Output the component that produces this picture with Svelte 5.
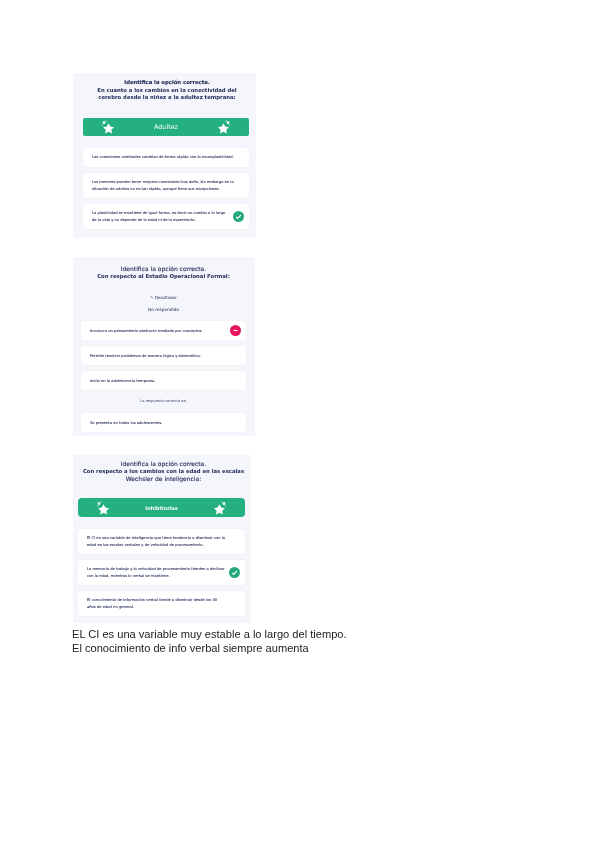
<script>
  const first = [
    { lines: ['Las conexiones cerebrales cambian de forma rápida con la neuroplasticidad.'] },
    { lines: ['Los menores pueden tener mejores conexiones tras daño, sin embargo en la', 'situación de adultos no es tan rápida, aunque tiene sus excepciones.'] },
    { lines: ['La plasticidad se mantiene de igual forma, es decir no cambia a lo largo', 'de la vida y no depende de la edad ni de la experiencia.'], mark: 'ok' }
  ];
  const third = [
    { lines: ['El CI es una variable de inteligencia que tiene tendencia a disminuir con la', 'edad en las escalas verbales y de velocidad de procesamiento.'] },
    { lines: ['La memoria de trabajo y la velocidad de procesamiento tienden a declinar', 'con la edad, mientras lo verbal se mantiene.'], mark: 'ok' },
    { lines: ['El conocimiento de información verbal tiende a disminuir desde los 30', 'años de edad en general.'] }
  ];
</script>

{#snippet star(flip)}
  <svg class="star" class:flip viewBox="0 0 24 24" aria-hidden="true">
    <path d="M13 5.5l3 5.8 6.4 1-4.6 4.4 1.1 6.3-5.9-3-5.9 3 1.1-6.3-4.6-4.4 6.4-1z" fill="#fff" />
    <circle cx="5" cy="4.5" r="2.2" fill="#fff" />
    <circle cx="8.5" cy="1.8" r="1.1" fill="#fff" />
    <circle cx="2.5" cy="8.5" r="1" fill="#fff" />
  </svg>
{/snippet}

{#snippet option(o)}
  <div class="option">
    <div class="option-text">
      {#each o.lines as l}<div>{l}</div>{/each}
    </div>
    {#if o.mark === 'ok'}
      <svg class="mark" viewBox="0 0 20 20" aria-hidden="true">
        <circle cx="10" cy="10" r="10" fill="#25a97c" />
        <path d="M5.5 10.5l3 3 6-6.5" fill="none" stroke="#fff" stroke-width="2" />
      </svg>
    {:else if o.mark === 'bad'}
      <svg class="mark" viewBox="0 0 20 20" aria-hidden="true">
        <circle cx="10" cy="10" r="10" fill="#e8175d" />
        <path d="M6.5 10h7" stroke="#fff" stroke-width="2" />
      </svg>
    {/if}
  </div>
{/snippet}

<main class="page">
  <section class="card one">
    <header class="title">
      <div class="lead">Identifica la opción correcta.</div>
      <div>En cuanto a los cambios en la conectividad del</div>
      <div>cerebro desde la niñez a la adultez temprana:</div>
    </header>
    <div class="banner">
      {@render star(false)}
      <span>Adultez</span>
      {@render star(true)}
    </div>
    <div class="options">
      {#each first as o}{@render option(o)}{/each}
    </div>
  </section>

  <section class="card two">
    <header class="title">
      <div class="lead">Identifica la opción correcta.</div>
      <div>Con respecto al Estadio Operacional Formal:</div>
    </header>
    <div class="note small">✎ Desafiador</div>
    <div class="note">No respondido</div>
    <div class="options">
      {@render option({ lines: ['Involucra un pensamiento abstracto mediado por conceptos.'], mark: 'bad' })}
      {@render option({ lines: ['Permite resolver problemas de manera lógica y sistemática.'] })}
      {@render option({ lines: ['Inicia en la adolescencia temprana.'] })}
    </div>
    <div class="note faint">La respuesta correcta es:</div>
    {@render option({ lines: ['Se presenta en todos los adolescentes.'] })}
  </section>

  <section class="card three">
    <header class="title">
      <div class="lead">Identifica la opción correcta.</div>
      <div>Con respecto a los cambios con la edad en las escalas</div>
      <div class="lead">Wechsler de inteligencia:</div>
    </header>
    <div class="banner">
      {@render star(false)}
      <strong>Inhibitorias</strong>
      {@render star(true)}
    </div>
    <div class="options">
      {#each third as o}{@render option(o)}{/each}
    </div>
  </section>

  <p class="caption">EL CI es una variable muy estable a lo largo del tiempo.<br />El conocimiento de info verbal siempre aumenta</p>
</main>

<style>
  :global(body) {
    background: #fff;
  }
  .page {
    padding: 73px 0 0 73px;
    width: 527px;
    box-sizing: border-box;
    display: flex;
    flex-direction: column;
    align-items: flex-start;
  }
  .card {
    background: #f4f6fb;
    box-sizing: border-box;
    font-family: "DejaVu Sans", sans-serif;
    color: #1c2654;
    filter: blur(0.5px);
  }
  .card.one {
    width: 183px;
    height: 165px;
    padding: 6px 7px 0 10px;
    margin-bottom: 19px;
  }
  .card.two {
    width: 182px;
    height: 179px;
    padding: 8px 9px 0 8px;
    margin-bottom: 19px;
  }
  .card.three {
    width: 178px;
    height: 168px;
    padding: 5px 6px 0 5px;
  }
  .title {
    text-align: center;
    font-size: 5.3px;
    line-height: 7.7px;
    font-weight: 700;
    white-space: nowrap;
  }
  .one .title {
    padding-left: 2px;
  }
  .three .title {
    padding-left: 4px;
  }
  .lead {
    font-size: 6px;
    font-weight: 400;
    -webkit-text-stroke: 0.1px #1c2654;
  }
  .one .lead {
    font-size: 5.3px;
    font-weight: 700;
  }
  .banner {
    height: 18px;
    background: #25b07f;
    border-radius: 3px;
    display: flex;
    align-items: center;
    justify-content: space-between;
    padding: 0 18px;
    color: #fff;
    font-size: 6.4px;
  }
  .one .banner {
    margin-top: 16px;
    margin-bottom: 12px;
    border-radius: 2px;
  }
  .three .banner {
    margin-top: 15px;
    margin-bottom: 12px;
    height: 19px;
    border-radius: 4px;
    font-size: 5px;
  }
  .star {
    width: 14px;
    height: 14px;
  }
  .star.flip {
    transform: scaleX(-1);
  }
  .options {
    display: flex;
    flex-direction: column;
    gap: 6px;
  }
  .option {
    background: #fff;
    border-radius: 3px;
    box-shadow: 0 0 2px rgba(60, 70, 120, 0.07);
    padding: 0 5px 0 9px;
    display: flex;
    align-items: center;
    justify-content: space-between;
    min-height: 19px;
  }
  .one .option:not(:first-child),
  .three .option {
    height: 25px;
  }
  .option-text {
    font-size: 3.7px;
    line-height: 6.4px;
    white-space: nowrap;
    color: #1c2654;
    -webkit-text-stroke: 0.08px #1c2654;
  }
  .mark {
    width: 11px;
    height: 11px;
    flex: none;
  }
  .note {
    text-align: center;
    font-size: 4.3px;
    line-height: 8px;
    margin-bottom: 7px;
  }
  .note.small {
    margin-top: 14px;
    margin-bottom: 4px;
    font-size: 4px;
  }
  .note.faint {
    font-size: 3.7px;
    margin: 7px 0 8px;
    color: #3c4670;
  }
  .caption {
    margin: 4px 0 0 -1px;
    font-family: "Liberation Sans", Arial, sans-serif;
    font-size: 11.1px;
    line-height: 14px;
    color: #222;
    filter: blur(0.25px);
  }
</style>
